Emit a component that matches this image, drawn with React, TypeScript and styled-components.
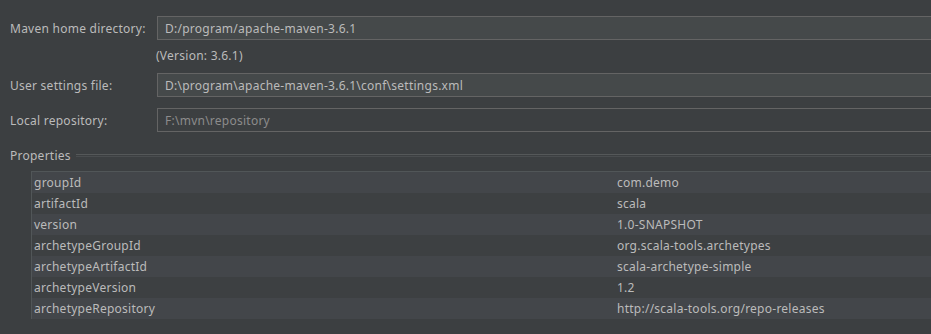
import React from "react";
import styled, { createGlobalStyle } from "styled-components";

const GlobalStyle = createGlobalStyle`
  html, body {
    margin: 0;
    padding: 0;
    background: #3c3f41;
    overflow: hidden;
  }
  body {
    font-family: "Noto Sans", "Liberation Sans", sans-serif;
    font-size: 12px;
    letter-spacing: 0.25px;
    color: #bbbbbb;
  }
`;

const Page = styled.div`
  width: 931px;
  height: 334px;
  padding-top: 16px;
  box-sizing: border-box;
`;

const Form = styled.div`
  display: grid;
  grid-template-columns: 157px 1fr;
  padding-left: 10px;
`;

const Label = styled.div<{ $top?: number }>`
  display: flex;
  align-items: center;
  height: 24px;
  margin-top: ${(p) => p.$top ?? 0}px;
  white-space: nowrap;
`;

const Field = styled.div<{ $disabled?: boolean; $top?: number }>`
  height: 24px;
  box-sizing: border-box;
  margin-top: ${(p) => p.$top ?? 0}px;
  margin-left: -10px;
  margin-right: -6px;
  display: flex;
  align-items: center;
  padding-left: 7px;
  border: 1px solid #646464;
  background: ${(p) => (p.$disabled ? "#3c3f41" : "#45494a")};
  color: ${(p) => (p.$disabled ? "#8c8c8c" : "#bbbbbb")};
  white-space: nowrap;
`;

const Hint = styled.div`
  grid-column: 2;
  margin-left: -11px;
  height: 18px;
  margin-top: 6px;
  margin-bottom: 9px;
  display: flex;
  align-items: center;
`;

const Spacer = styled.div`
  grid-column: 1;
`;

const SectionTitle = styled.div`
  display: flex;
  align-items: center;
  gap: 5px;
  margin-top: 15px;
  padding-left: 10px;
  height: 16px;
`;

const TitleLine = styled.div`
  flex: 1;
  height: 1px;
  border-top: 1px solid #555859;
  border-bottom: 1px solid #4a4d4f;
`;

const Table = styled.div`
  margin: 8px 0 0 31px;
  border-top: 1px solid #515658;
  border-left: 1px solid #515658;
`;

const Row = styled.div<{ $odd: boolean }>`
  display: grid;
  grid-template-columns: 583px 1fr;
  height: 21px;
  align-items: center;
  background: ${(p) => (p.$odd ? "#43464a" : "#3d4042")};
  white-space: nowrap;
`;

const Cell = styled.div`
  padding-left: 2px;
`;

const props: [string, string][] = [
  ["groupId", "com.demo"],
  ["artifactId", "scala"],
  ["version", "1.0-SNAPSHOT"],
  ["archetypeGroupId", "org.scala-tools.archetypes"],
  ["archetypeArtifactId", "scala-archetype-simple"],
  ["archetypeVersion", "1.2"],
  ["archetypeRepository", "http://scala-tools.org/repo-releases"],
];

export default function App() {
  return (
    <Page>
      <GlobalStyle />
      <Form>
        <Label>Maven home directory:</Label>
        <Field>D:/program/apache-maven-3.6.1</Field>
        <Spacer />
        <Hint>(Version: 3.6.1)</Hint>
        <Label>User settings file:</Label>
        <Field>D:\program\apache-maven-3.6.1\conf\settings.xml</Field>
        <Label $top={11}>Local repository:</Label>
        <Field $top={11} $disabled>
          F:\mvn\repository
        </Field>
      </Form>
      <SectionTitle>
        Properties
        <TitleLine />
      </SectionTitle>
      <Table>
        {props.map(([k, v], i) => (
          <Row key={k} $odd={i % 2 === 0}>
            <Cell>{k}</Cell>
            <Cell>{v}</Cell>
          </Row>
        ))}
      </Table>
    </Page>
  );
}
